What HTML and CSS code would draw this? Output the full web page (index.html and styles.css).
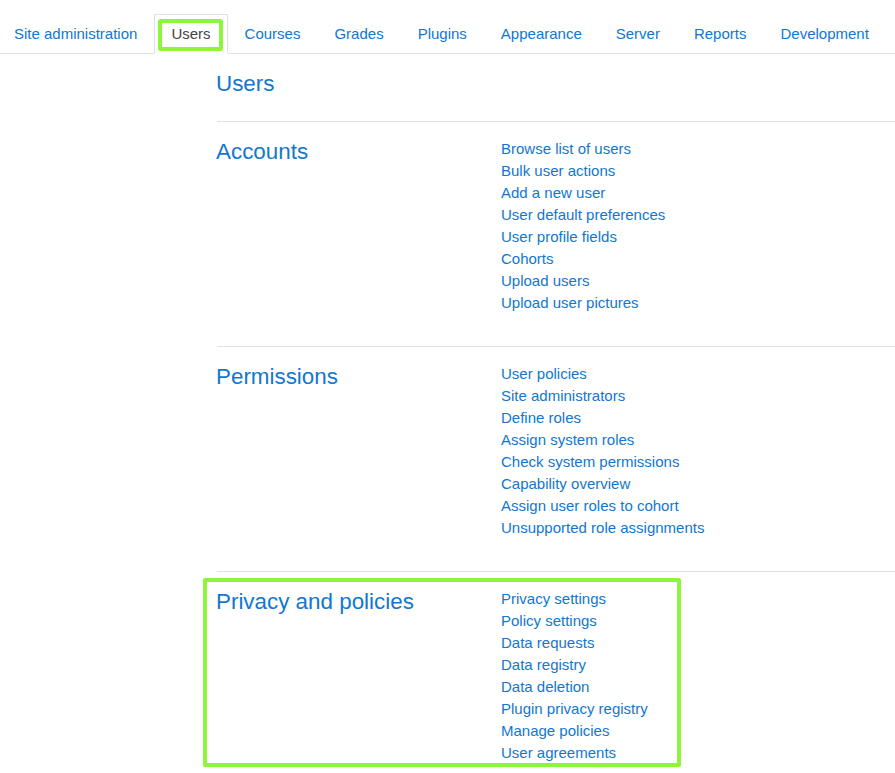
FILE: index.html
```html
<!DOCTYPE html>
<html lang="en">
<head>
  <meta charset="UTF-8" />
  <title>Site administration – Users</title>
  <link rel="stylesheet" href="styles.css">
</head>
<body>

<ul class="tabs">
  <li><a href="#">Site administration</a></li>
  <li><a href="#" class="active">Users</a></li>
  <li><a href="#">Courses</a></li>
  <li><a href="#">Grades</a></li>
  <li><a href="#">Plugins</a></li>
  <li><a href="#">Appearance</a></li>
  <li><a href="#">Server</a></li>
  <li><a href="#">Reports</a></li>
  <li><a href="#">Development</a></li>
</ul>

<div class="main">
  <h2 class="page-title">Users</h2>

  <div class="admin-section">
    <h3>Accounts</h3>
    <ul class="links">
      <li><a href="#">Browse list of users</a></li>
      <li><a href="#">Bulk user actions</a></li>
      <li><a href="#">Add a new user</a></li>
      <li><a href="#">User default preferences</a></li>
      <li><a href="#">User profile fields</a></li>
      <li><a href="#">Cohorts</a></li>
      <li><a href="#">Upload users</a></li>
      <li><a href="#">Upload user pictures</a></li>
    </ul>
  </div>

  <div class="admin-section">
    <h3>Permissions</h3>
    <ul class="links">
      <li><a href="#">User policies</a></li>
      <li><a href="#">Site administrators</a></li>
      <li><a href="#">Define roles</a></li>
      <li><a href="#">Assign system roles</a></li>
      <li><a href="#">Check system permissions</a></li>
      <li><a href="#">Capability overview</a></li>
      <li><a href="#">Assign user roles to cohort</a></li>
      <li><a href="#">Unsupported role assignments</a></li>
    </ul>
  </div>

  <div class="admin-section highlight">
    <h3>Privacy and policies</h3>
    <ul class="links">
      <li><a href="#">Privacy settings</a></li>
      <li><a href="#">Policy settings</a></li>
      <li><a href="#">Data requests</a></li>
      <li><a href="#">Data registry</a></li>
      <li><a href="#">Data deletion</a></li>
      <li><a href="#">Plugin privacy registry</a></li>
      <li><a href="#">Manage policies</a></li>
      <li><a href="#">User agreements</a></li>
    </ul>
  </div>
</div>

</body>
</html>
```

FILE: styles.css
```css
html, body {
  margin: 0;
  padding: 0;
  background: white;
  font-family: "Liberation Sans", Arial, sans-serif;
  font-size: 15px;
  color: #373a3c;
  overflow: hidden;
}

a {
  color: #1177d1;
  text-decoration: none;
}

/* tab bar */
.tabs {
  display: flex;
  list-style: none;
  margin: 14px 0 0 -3px;
  padding: 0;
  border-bottom: 1px solid #dee2e6;
}

.tabs a {
  display: block;
  position: relative;
  padding: 8px 16px;
  line-height: 22px;
  border: 1px solid transparent;
  margin-bottom: -1px;
  white-space: nowrap;
}

.tabs a.active {
  color: #444;
  background: white;
  border-color: #dee2e6 #dee2e6 white;
}

.tabs a.active::after {
  content: "";
  position: absolute;
  top: 4px;
  left: 3px;
  right: 4px;
  bottom: 2px;
  border: 4px solid #8ef53a;
  border-radius: 3px;
}

/* main content */
.main {
  padding-left: 217px;
}

.page-title,
.admin-section h3 {
  font-size: 22.4px;
  font-weight: normal;
  line-height: 27px;
  color: #1177d1;
  margin: 0 0 0 -1px;
}

.page-title {
  margin: 16px 0 24px -1px;
}

.admin-section {
  display: flex;
  position: relative;
  border-top: 1px solid #dee2e6;
  padding: 16px 0 32px;
}

.admin-section h3 {
  width: 284px;
  flex-shrink: 0;
  margin-right: 1px;
}

.links {
  list-style: none;
  margin: 0;
  padding: 0;
  line-height: 22px;
}

.highlight::after {
  content: "";
  position: absolute;
  top: 6px;
  left: -14px;
  width: 478px;
  height: 189px;
  box-sizing: border-box;
  border: 4px solid #8ef53a;
  border-radius: 2px;
}
```
